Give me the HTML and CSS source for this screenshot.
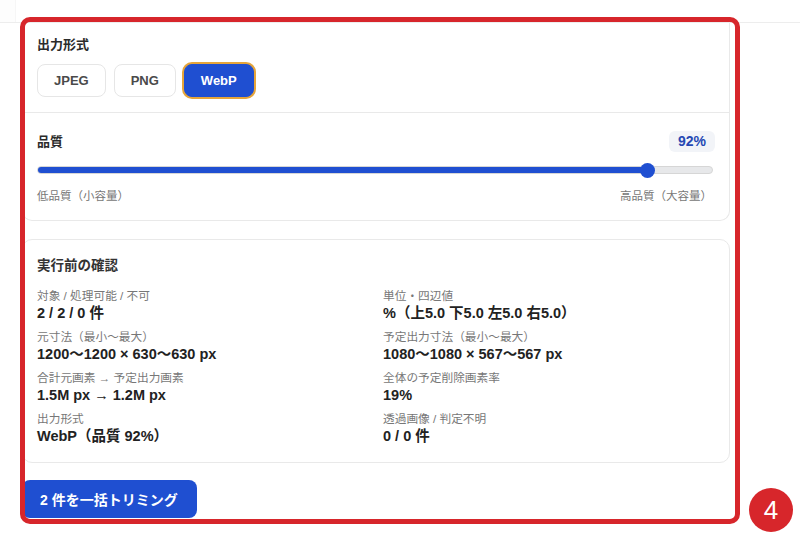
FILE: index.html
```html
<!DOCTYPE html>
<html lang="ja">
<head>
  <meta charset="UTF-8">
  <meta name="viewport" content="width=device-width, initial-scale=1.0">
  <title>一括トリミング</title>
  <link rel="stylesheet" href="styles.css">
</head>
<body>
  <div class="topbar"><span class="topbar-stub"></span></div>

  <main class="main">
    <section class="card">
      <div class="section">
        <h3 class="label">出力形式</h3>
        <div class="formats">
          <button class="fmt">JPEG</button>
          <button class="fmt">PNG</button>
          <button class="fmt active">WebP</button>
        </div>
      </div>

      <div class="section quality">
        <div class="quality-head">
          <h3 class="label">品質</h3>
          <span class="pill">92%</span>
        </div>
        <div class="slider">
          <div class="slider-fill" style="width: 90.4%"></div>
          <span class="slider-thumb" style="left: 90.4%"></span>
        </div>
        <div class="slider-hints">
          <span>低品質（小容量）</span>
          <span>高品質（大容量）</span>
        </div>
      </div>
    </section>

    <section class="card confirm">
      <h3 class="confirm-title">実行前の確認</h3>
      <dl class="facts">
        <div class="fact">
          <dt>対象 / 処理可能 / 不可</dt>
          <dd>2 / 2 / 0 件</dd>
        </div>
        <div class="fact">
          <dt>単位・四辺値</dt>
          <dd>%（上5.0 下5.0 左5.0 右5.0）</dd>
        </div>
        <div class="fact">
          <dt>元寸法（最小〜最大）</dt>
          <dd>1200〜1200 × 630〜630 px</dd>
        </div>
        <div class="fact">
          <dt>予定出力寸法（最小〜最大）</dt>
          <dd>1080〜1080 × 567〜567 px</dd>
        </div>
        <div class="fact">
          <dt>合計元画素 → 予定出力画素</dt>
          <dd>1.5M px → 1.2M px</dd>
        </div>
        <div class="fact">
          <dt>全体の予定削除画素率</dt>
          <dd>19%</dd>
        </div>
        <div class="fact">
          <dt>出力形式</dt>
          <dd>WebP（品質 92%）</dd>
        </div>
        <div class="fact">
          <dt>透過画像 / 判定不明</dt>
          <dd>0 / 0 件</dd>
        </div>
      </dl>
    </section>

    <button class="run-btn">2 件を一括トリミング</button>
  </main>

  <div class="highlight"></div>
  <div class="step-badge">4</div>
</body>
</html>
```

FILE: styles.css
```css
body { margin: 0; background: #fff; font-family: "Liberation Sans", "Noto Sans CJK JP", sans-serif; color: #222; }
h3, dl, dd { margin: 0; }

.topbar { height: 22px; border-bottom: 1px solid #ededed; }
.topbar-stub { display: block; width: 15px; height: 22px; border-right: 1px solid #f6f6f6; background: #fdfdfd; }

.main { width: 708px; padding: 0 0 0 22px; }

.card { background: #fff; border: 1px solid #e9e9e9; border-radius: 10px; }
.card:first-child { border-top: none; border-radius: 0 0 10px 10px; }

.section { padding: 13px 14px 15px; }
.label { font-size: 13px; font-weight: bold; color: #2b2b2b; line-height: 18px; }

.formats { display: flex; gap: 8px; margin-top: 10px; }
.fmt { height: 33px; padding: 0 16px; border: 1px solid #e6e6e6; border-radius: 8px; background: #fff; color: #4a4a4a; font: bold 13px "Liberation Sans", sans-serif; }
.fmt.active { background: #1f4fd1; border-color: #1f4fd1; color: #fff; box-shadow: 0 0 0 2px #e6a53a; }

.quality { border-top: 1px solid #e9e9e9; padding-top: 18px; padding-bottom: 17px; }
.quality-head { display: flex; justify-content: space-between; align-items: center; }
.pill { background: #f2f4f8; color: #2548b3; font-weight: bold; font-size: 14px; line-height: 21px; padding: 0 9px; border-radius: 6px; }

.slider { position: relative; height: 6px; margin: 14px 2px 0 0; background: #e7e8ea; border: 1px solid #d6d6d6; border-radius: 4px; }
.slider-fill { height: 100%; background: #1f4fd1; border-radius: 4px 0 0 4px; }
.slider-thumb { position: absolute; top: 50%; width: 15px; height: 15px; margin: -7.5px 0 0 -7.5px; border-radius: 50%; background: #1f4fd1; }

.slider-hints { display: flex; justify-content: space-between; margin-top: 13px; padding-right: 3px; font-size: 11.5px; color: #777; }

.confirm { margin-top: 18px; padding: 16px 14px 17px; }
.confirm-title { font-size: 13.5px; font-weight: bold; color: #333; line-height: 20px; }

.facts { display: grid; grid-template-columns: 1fr 1fr; column-gap: 14px; row-gap: 7px; margin-top: 12px; }
.fact dt { font-size: 11.7px; color: #777; line-height: 16px; }
.fact dd { font-size: 14.5px; font-weight: bold; color: #222; line-height: 18px; }

.run-btn { margin-top: 17px; height: 38px; width: 175px; padding: 0 18px; text-align: left; border: none; border-radius: 8px; background: #1f4fd1; color: #fff; font: bold 14px "Liberation Sans", "Noto Sans CJK JP", sans-serif; }

.highlight { position: absolute; left: 20px; top: 17px; width: 710px; height: 497px; border: 5px solid #d7262b; border-radius: 10px; }
.step-badge { position: absolute; left: 749px; top: 488px; width: 44px; height: 44px; border-radius: 50%; background: #d7262b; color: #fff; font: 26px "Liberation Sans", sans-serif; display: flex; align-items: center; justify-content: center; }
```
